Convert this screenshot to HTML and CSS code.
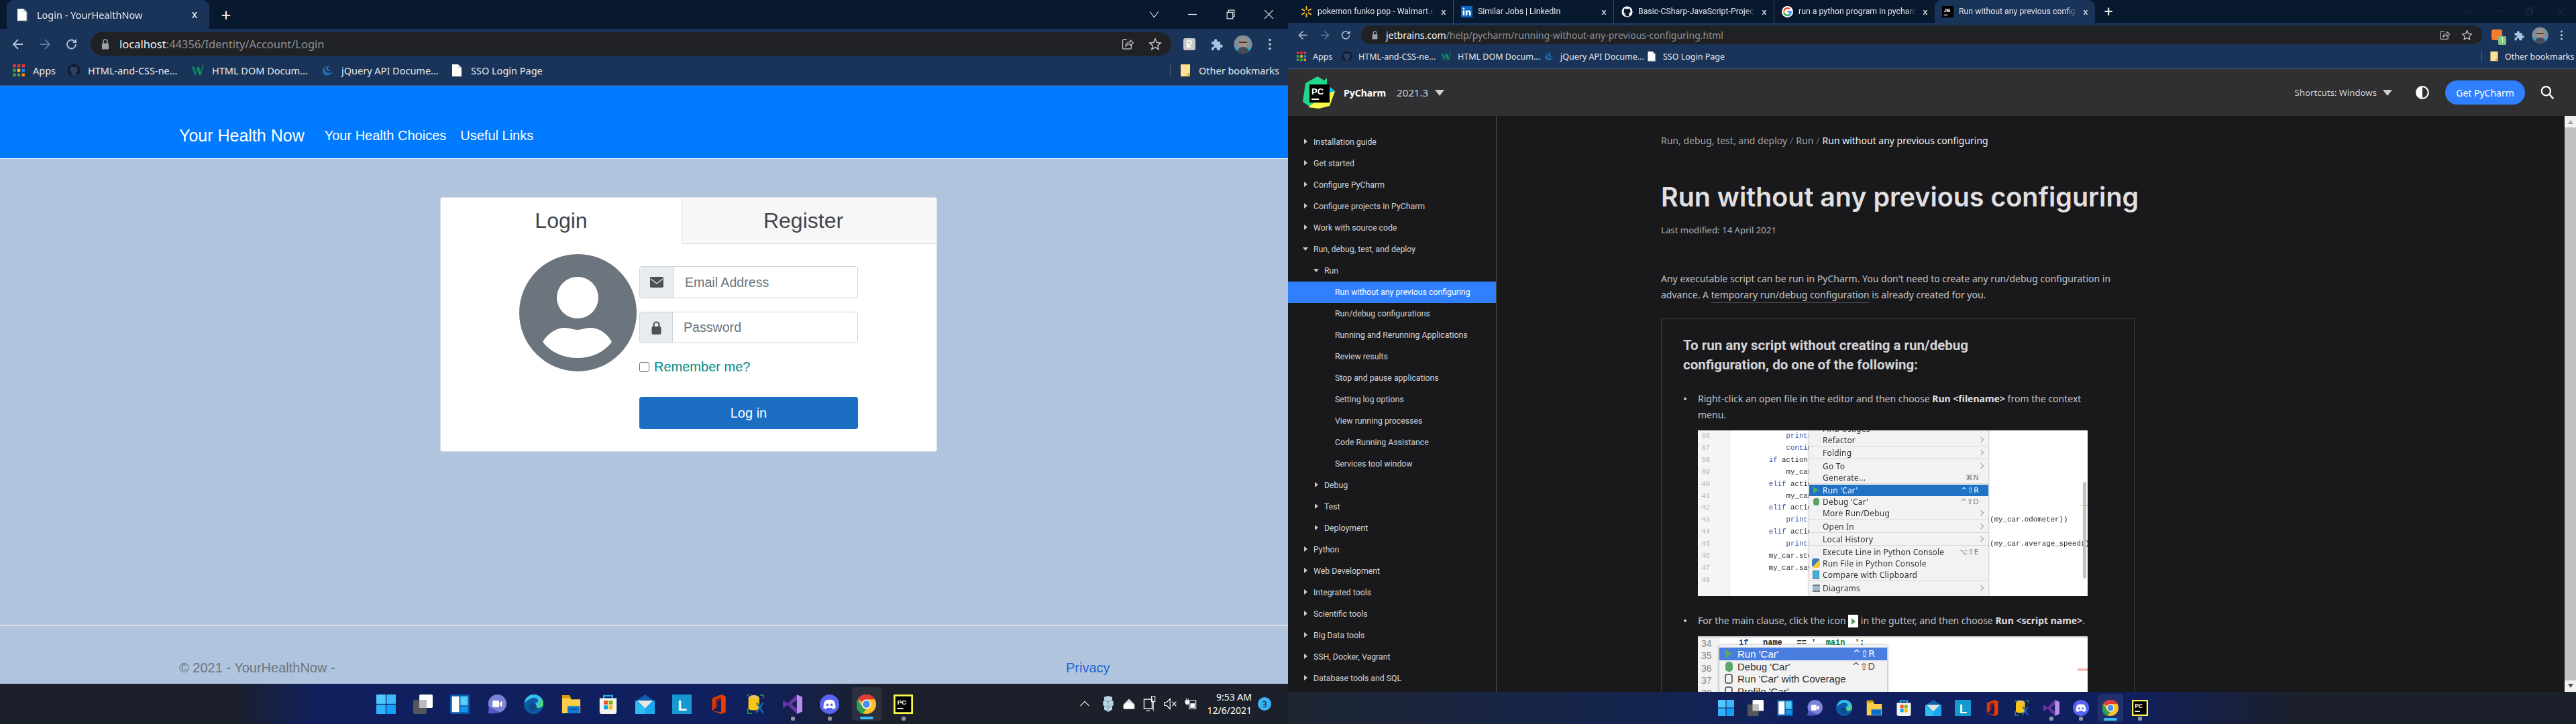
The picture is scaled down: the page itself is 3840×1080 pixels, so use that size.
FILE: index.html
```html
<!DOCTYPE html>
<html lang="en">
<head>
<meta charset="utf-8">
<title>Two Chrome windows</title>
<link rel="stylesheet" href="styles.css">
</head>
<body>
<svg class="sprite" aria-hidden="true">
  <symbol id="i-doc" viewBox="0 0 20 20"><path d="M3 1h9l5 5v13H3z" fill="#fff"/><path d="M12 1v5h5" fill="#c9d2dd"/><path d="M17 6v13H5" fill="none" stroke="#8b97a6" stroke-width="1.2"/></symbol>
  <symbol id="c-chev" viewBox="0 0 14 14"><path d="M1 3l6 8 6-8" fill="none" stroke="currentColor" stroke-width="1"/></symbol>
  <symbol id="c-min" viewBox="0 0 14 14"><path d="M1 7h12" stroke="currentColor" stroke-width="1.200"/></symbol>
  <symbol id="c-max" viewBox="0 0 14 14"><path d="M2 4h8v9H2zM4 4V1h8v9h-2" fill="none" stroke="currentColor" stroke-width="1.100"/></symbol>
  <symbol id="c-close" viewBox="0 0 14 14"><path d="M1 1l12 12M13 1L1 13" stroke="currentColor" stroke-width="1.100"/></symbol>
  <symbol id="i-back" viewBox="0 0 20 20"><path d="M17 10H4M10 3l-7 7 7 7" fill="none" stroke="currentColor" stroke-width="1.8"/></symbol>
  <symbol id="i-fwd" viewBox="0 0 20 20"><path d="M3 10h13M10 3l7 7-7 7" fill="none" stroke="currentColor" stroke-width="1.8"/></symbol>
  <symbol id="i-reload" viewBox="0 0 20 20"><path d="M16 10a6.500 6.500 0 1 1-2-4.700" fill="none" stroke="currentColor" stroke-width="1.8"/><path d="M17 2v6h-6z" fill="currentColor"/></symbol>
  <symbol id="i-lock" viewBox="0 0 14 18"><path d="M4 8V5a3 3 0 0 1 6 0v3" fill="none" stroke="#9aa0a6" stroke-width="1.6"/><rect x="2" y="7.500" width="10" height="9" rx="1" fill="#9aa0a6"/></symbol>
  <symbol id="i-share" viewBox="0 0 20 20"><path d="M9 3H4a1.500 1.500 0 0 0-1.500 1.500v11A1.500 1.500 0 0 0 4 17h10a1.500 1.500 0 0 0 1.500-1.500V11" fill="none" stroke="#b7babe" stroke-width="1.4"/><path d="M7 13c0-4 3-6.500 7-6.500V4l4.500 4-4.500 4V9.500c-3 0-5 1-7 3.500z" fill="none" stroke="#b7babe" stroke-width="1.3"/></symbol>
  <symbol id="i-star" viewBox="0 0 20 20"><path d="M10 2l2.400 5.400 5.800.6-4.400 3.900 1.300 5.700L10 14.700l-5.100 2.900 1.300-5.700L1.800 8l5.800-.6z" fill="none" stroke="#c8cbcf" stroke-width="1.5"/></symbol>
  <symbol id="i-puzzle" viewBox="0 0 20 20"><path d="M3 6h4V4.500a2.200 2.200 0 0 1 4.400 0V6H16v4.500h1.500a2.200 2.200 0 0 1 0 4.400H16V19H11v-1.500a2.200 2.200 0 0 0-4.400 0V19H3v-4.500h1.500a2.200 2.200 0 0 0 0-4.400H3z" fill="#a8c0e2"/></symbol>
  <symbol id="i-avatar" viewBox="0 0 28 28"><defs><clipPath id="av"><circle cx="14" cy="14" r="13.500"/></clipPath></defs><g clip-path="url(#av)"><rect width="28" height="28" fill="#7f8f99"/><rect y="19" width="28" height="9" fill="#2fa9c6"/><ellipse cx="14" cy="12" rx="6" ry="7.500" fill="#a99083"/><path d="M5 28c0-7 4-10 9-10s9 3 9 10z" fill="#454c55"/><rect x="8" y="10" width="12" height="2" fill="#3c3c3c"/></g></symbol>
  <symbol id="i-menu" viewBox="0 0 6 20"><circle cx="3" cy="3.500" r="1.800" fill="#c3cfe0"/><circle cx="3" cy="10" r="1.800" fill="#c3cfe0"/><circle cx="3" cy="16.500" r="1.800" fill="#c3cfe0"/></symbol>
  <symbol id="i-ext" viewBox="0 0 20 20"><rect x="1" y="1" width="18" height="18" rx="3" fill="#c9c9c9"/><path d="M7 15V5h4a2.500 2.500 0 0 1 0 5H8l4 5M9 10v5" fill="none" stroke="#fff" stroke-width="1.500"/></symbol>
  <symbol id="i-apps" viewBox="0 0 18 18"><path d="M1 1h4v4H1zM7 1h4v4H7zM13 1h4v4h-4z" fill="#e53935"/><path d="M1 7h4v4H1z" fill="#43a047"/><path d="M7 7h4v4H7z" fill="#fbc02d"/><path d="M13 7h4v4h-4z" fill="#1e88e5"/><path d="M1 13h4v4H1zM7 13h4v4H7z" fill="#43a047"/><path d="M13 13h4v4h-4z" fill="#fb8c00"/></symbol>
  <symbol id="i-gh" viewBox="0 0 20 20"><circle cx="10" cy="10" r="9.500" fill="currentColor"/><path d="M7.500 18v-3c-2.500.5-3-1-3.500-2 1 .3 1.500 1 2.500 1.300.3-.7.6-1 1-1.300-2.500-.4-3.500-1.700-3.500-4 0-1 .3-1.800 1-2.500-.2-.8-.1-1.600.2-2.300.9 0 1.700.4 2.300 1a8 8 0 0 1 5 0c.6-.6 1.400-1 2.300-1 .3.700.4 1.500.2 2.300.7.700 1 1.500 1 2.500 0 2.300-1 3.600-3.500 4 .5.400 1 1 1 1.800V18z" fill="var(--gh-in,#1a3358)"/></symbol>
  <symbol id="i-w3" viewBox="0 0 22 20"><path d="M1 4h4l2 9 3-9h3l3 9 2-9h2l-4 14h-3l-3-9-3 9H6z" fill="#0f8a5f"/><path d="M17 1h3v1l-1 1 1 1-1 1h-2" fill="none" stroke="#0f8a5f" stroke-width=".8"/></symbol>
  <symbol id="i-jq" viewBox="0 0 20 22"><path d="M12 1C6 4 4 9 7 13c3 3 8 3 12-1-3 7-10 9-14 6C0 14 2 5 12 1z" fill="#1f6fb5"/><path d="M14 3c-3 2-4 5-2 7 2 1 4 1 6-1-2 3-6 4-8 2-3-3-1-7 4-8z" fill="#2f86cf"/></symbol>
  <symbol id="i-folder" viewBox="0 0 20 20"><path d="M3 1h14v18H3z" fill="#fde293"/><path d="M13 19v-5h4v5z" fill="#e3b341"/></symbol>
  <symbol id="i-walmart" viewBox="0 0 20 20"><g stroke="#fdbb30" stroke-width="2.200" stroke-linecap="round"><path d="M10 1v5M10 14v5M2.200 5.500l4.300 2.500M13.500 12l4.300 2.500M2.200 14.500l4.300-2.500M13.500 8l4.300-2.500"/></g></symbol>
  <symbol id="i-li" viewBox="0 0 20 20"><rect width="20" height="20" fill="#0a66c2"/><rect x="3" y="7.500" width="3" height="9" fill="#fff"/><circle cx="4.500" cy="4.500" r="1.700" fill="#fff"/><path d="M8 7.500h3V9c1-2 6-2.500 6 2v5.500h-3V12c0-2.500-3-2.500-3 0v4.500H8z" fill="#fff"/></symbol>
  <symbol id="i-g" viewBox="0 0 20 20"><circle cx="10" cy="10" r="10" fill="#fff"/><path d="M17.500 10.200c0-.6 0-1.100-.2-1.600H10v3h4.200a3.600 3.600 0 0 1-1.500 2.400v2h2.500c1.500-1.400 2.300-3.400 2.300-5.800z" fill="#4285f4"/><path d="M10 18c2.100 0 3.900-.7 5.200-1.900l-2.500-2c-.7.500-1.600.8-2.700.8-2 0-3.800-1.400-4.400-3.300H3v2C4.300 16.300 7 18 10 18z" fill="#34a853"/><path d="M5.600 11.600a4.800 4.800 0 0 1 0-3.100v-2H3a8 8 0 0 0 0 7.100z" fill="#fbbc05"/><path d="M10 5.100c1.200 0 2.200.4 3 1.200l2.200-2.200A8 8 0 0 0 3 6.500l2.600 2c.6-1.900 2.400-3.400 4.400-3.400z" fill="#ea4335"/></symbol>
  <symbol id="i-jb" viewBox="0 0 20 20"><rect width="20" height="20"/><text x="3" y="11" font-family="Liberation Sans" font-weight="700" font-size="9" fill="#fff">JB</text><rect x="3" y="15" width="7" height="1.500" fill="#fff"/></symbol>
  <symbol id="i-pc" viewBox="0 0 48 48"><path d="M4 10L22 0l10 6 4-4v18L12 46 0 38z" fill="#21d789"/><path d="M36 12l12 10-8 12z" fill="#07c3f2"/><path d="M8 46l16 2 16-4 8-22-14 4z" fill="#fcf84a"/><rect x="10" y="12" width="30" height="27" fill="#000"/><text x="13" y="27" font-family="Liberation Sans" font-weight="700" font-size="13" fill="#fff">PC</text><rect x="13" y="33" width="11" height="2" fill="#fff"/></symbol>
  <symbol id="i-contrast" viewBox="0 0 20 20"><circle cx="10" cy="10" r="8" fill="none" stroke="#fff" stroke-width="2"/><path d="M10 2a8 8 0 0 0 0 16z" fill="#fff"/></symbol>
  <symbol id="i-search" viewBox="0 0 20 20"><circle cx="8.500" cy="8" r="6" fill="none" stroke="#fff" stroke-width="2"/><path d="M13 12.500l5.500 6" stroke="#fff" stroke-width="2.200"/></symbol>
  <symbol id="i-env" viewBox="0 0 20 16"><rect width="20" height="16" rx="2" fill="#495057"/><path d="M1 3l9 7 9-7" fill="none" stroke="#e9ecef" stroke-width="1.200"/></symbol>
  <symbol id="i-padlock" viewBox="0 0 16 20"><path d="M4 9V5.500a4 4 0 0 1 8 0V9" fill="none" stroke="#495057" stroke-width="2.200"/><rect x="1" y="8" width="14" height="12" rx="2" fill="#495057"/></symbol>
  <symbol id="i-user" viewBox="0 0 175 175"><circle cx="87.500" cy="87.500" r="87.500" fill="#6c757d"/><circle cx="87" cy="65" r="31" fill="#fff"/><path d="M35 131C43 118 55 110 68 110c8 0 12 3 19 3s11-3 19-3c13 0 25 8 32 21-12 16-31 24-51 24s-40-8-52-24z" fill="#fff"/></symbol>
  <symbol id="t-win" viewBox="0 0 32 32"><path d="M0 0h15.300v15.300H0z" fill="#4fc8ff"/><path d="M16.700 0H32v15.300H16.700z" fill="#3cb8fb"/><path d="M0 16.700h15.300V32H0z" fill="#2db2fb"/><path d="M16.700 16.700H32V32H16.700z" fill="#15a0f5"/></symbol>
  <symbol id="t-task" viewBox="0 0 32 32"><rect x="10" y="0" width="22" height="22" rx="2" fill="#fff"/><rect x="0" y="9" width="22" height="23" rx="2" fill="#5b5b5b" opacity=".92"/><rect x="10" y="9" width="12" height="13" fill="#bdbdbd"/></symbol>
  <symbol id="t-widget" viewBox="0 0 32 32"><rect width="32" height="32" rx="2" fill="#0b5cad"/><rect x="3" y="3" width="12" height="26" rx="1" fill="#fff"/><rect x="17" y="3" width="12" height="15" fill="#58cdfc"/><rect x="17" y="20" width="12" height="9" fill="#1397ea"/></symbol>
  <symbol id="t-chat" viewBox="0 0 32 32"><ellipse cx="17" cy="15" rx="15" ry="15" fill="#7b83d8"/><path d="M3 20c0 5-1 9-2 11 8 1 14 0 20-2z" fill="#5558c4"/><rect x="9" y="10" width="11" height="11" rx="2" fill="#fff"/><path d="M21 13l4-2v9l-4-2z" fill="#fff"/></symbol>
  <symbol id="t-edge" viewBox="0 0 32 32"><circle cx="16" cy="16" r="16" fill="#0c59a4"/><path d="M1 13C3 4 10 0 16 0c9 0 16 6 16 15 0 4-3 7-8 7-4 0-6-2-6-4 0-6 5-3 5-8 0-4-6-6-10-4-6 2-9 6-12 7z" fill="#35c1f1"/><path d="M26 6c4 3 6 6 6 9 0 4-3 7-8 7-3 0-5-1-6-3 5 1 8-2 8-13z" fill="#52d17c"/><ellipse cx="15" cy="21" rx="6" ry="7" fill="#114a8b"/></symbol>
  <symbol id="t-folder" viewBox="0 0 32 32"><path d="M1 4h12l3 4h15v23H1z" fill="#fccd48"/><path d="M1 1h12l3 5H1z" fill="#d8a00f"/><rect x="10" y="19" width="20" height="12" fill="#0f78d4"/><rect x="13" y="23" width="14" height="2" fill="#0b4f91"/></symbol>
  <symbol id="t-store" viewBox="0 0 32 32"><path d="M9 7V2h14v5" fill="none" stroke="#27b0ee" stroke-width="2.500"/><path d="M2 6h28v22a4 4 0 0 1-4 4H6a4 4 0 0 1-4-4z" fill="#f3f3f3"/><rect x="9" y="10" width="6.500" height="6.500" fill="#f25022"/><rect x="17" y="10" width="6.500" height="6.500" fill="#7fba00"/><rect x="9" y="18" width="6.500" height="6.500" fill="#00a4ef"/><rect x="17" y="18" width="6.500" height="6.500" fill="#ffb900"/></symbol>
  <symbol id="t-mail" viewBox="0 0 32 32"><path d="M16 0l16 11H0z" fill="#0f5fb4"/><rect y="10" width="32" height="22" fill="#1aa7ec"/><path d="M3 10h26L16 23z" fill="#e6e6e6"/><path d="M0 11l16 13v8H0z" fill="#32bdf2"/></symbol>
  <symbol id="t-l" viewBox="0 0 32 32"><rect width="32" height="32" fill="#1699d1"/><text x="9" y="26" font-family="Liberation Sans" font-weight="700" font-size="25" fill="#fff">L</text></symbol>
  <symbol id="t-office" viewBox="0 0 32 32"><path d="M5 6L20 0l7 3v26l-7 3-15-5 15 2V5L11 8v14l-6 5z" fill="#d83b01"/><path d="M20 0l7 3v26l-7 3z" fill="#eb3c00"/><path d="M11 8l9-3v4l-6 2v10l-3 1z" fill="#8c1a2b"/></symbol>
  <symbol id="t-ssms" viewBox="0 0 32 32"><ellipse cx="13" cy="6" rx="9" ry="5" fill="#e8c36a"/><path d="M4 6v16c0 3 4 4 9 4s9-1 9-4V6z" fill="#f5c518"/><path d="M3 3V0h6M29 6V1h-6M3 22v9h7" fill="none" stroke="#2e8b3c" stroke-width="2"/><path d="M18 14l10 16M28 14L17 30" stroke="#1b6fc2" stroke-width="2.500"/></symbol>
  <symbol id="t-vs" viewBox="0 0 32 32"><path d="M23 0l9 4v24l-9 4z" fill="#b58ee6"/><path d="M23 0L8 15 2 10 0 11v10l2 1 6-5 15 15v-9L14 16l9-7z" fill="#6a33a8"/></symbol>
  <symbol id="t-discord" viewBox="0 0 32 32"><circle cx="16" cy="16" r="16" fill="#5865f2"/><path d="M9 10c4-2 10-2 14 0 2 3 3 7 3 12-2 1-3 2-5 2l-1-2h-8l-1 2c-2 0-3-1-5-2 0-5 1-9 3-12z" fill="#fff"/><circle cx="12.500" cy="17" r="2" fill="#5865f2"/><circle cx="19.500" cy="17" r="2" fill="#5865f2"/></symbol>
  <symbol id="t-chrome" viewBox="0 0 32 32"><circle cx="16" cy="16" r="16" fill="#fbc02d"/><path d="M2.100 8A16 16 0 0 1 29.900 8H16a8 8 0 0 0-7 4z" fill="#e53935"/><path d="M2.100 8l7 12A8 8 0 0 0 16 24l-7 8A16 16 0 0 1 2.100 8z" fill="#2e9e4f"/><circle cx="16" cy="16" r="7.500" fill="#fff"/><circle cx="16" cy="16" r="6" fill="#4a8ef0"/></symbol>
  <symbol id="t-pycharm" viewBox="0 0 32 32"><rect width="32" height="32" fill="#fcf84a"/><rect x="3" y="3" width="26" height="26" fill="#000"/><text x="6" y="16" font-family="Liberation Sans" font-weight="700" font-size="11" fill="#fff">PC</text><rect x="6" y="22" width="10" height="2" fill="#fff"/></symbol>
  <symbol id="t-cube" viewBox="0 0 20 28"><path d="M3 2l7-2 7 2v6l2 2v6l-2 2v6l-7 4-7-4v-6l-2-2v-6l2-2z" fill="#b9d4e4"/><path d="M10 8v20M3 8l7 2 7-2M3 18l7 2 7-2" stroke="#6f97ad" fill="none"/></symbol>
  <symbol id="t-cloud" viewBox="0 0 24 20"><path d="M2 11L12 1l10 10v8H2z" fill="#d9d9d9"/><path d="M6 19a4 4 0 0 1 0-8 6 6 0 0 1 11 0 4 4 0 0 1 1 8z" fill="#fff"/></symbol>
  <symbol id="t-net" viewBox="0 0 22 28"><path d="M1 6h14v16H1zM5 26h6" fill="none" stroke="#fff" stroke-width="1.500"/><rect x="14" y="1" width="6" height="9" fill="none" stroke="#fff" stroke-width="1.300"/><path d="M17 10v16" stroke="#fff" stroke-width="1.300"/></symbol>
  <symbol id="t-mute" viewBox="0 0 24 22"><path d="M1 8h4l6-6v18l-6-6H1z" fill="none" stroke="#fff" stroke-width="1.400"/><path d="M15 7l7 8M22 7l-7 8" stroke="#fff" stroke-width="1.400"/></symbol>
  <symbol id="t-batt" viewBox="0 0 24 24"><path d="M8 6h12v15H8z" fill="none" stroke="#fff" stroke-width="1.400"/><rect x="10" y="11" width="8" height="8" fill="#fff"/><path d="M3 2v4M6 2v4M1 6h7v4l-2 3H3L1 10z" fill="#fff" stroke="#fff"/></symbol>
</svg>

<div class="desktop">
  <section class="screen screen-l">
    <div class="window win-l">
      <header class="chrome">
        <div class="tabstrip">
          <div class="tab tab-active tab-single"><svg class="fav"><use href="#i-doc"/></svg><span class="tab-title">Login - YourHealthNow</span><span class="tab-x">x</span></div>
          <span class="tab-new">+</span>
          <div class="winctl"><span class="ctl"><svg class="ctl-ico"><use href="#c-chev"/></svg></span><span class="ctl"><svg class="ctl-ico"><use href="#c-min"/></svg></span><span class="ctl"><svg class="ctl-ico"><use href="#c-max"/></svg></span><span class="ctl"><svg class="ctl-ico"><use href="#c-close"/></svg></span></div>
        </div>
        <div class="toolbar">
          <svg class="nav-ico"><use href="#i-back"/></svg>
          <svg class="nav-ico nav-dim"><use href="#i-fwd"/></svg>
          <svg class="nav-ico"><use href="#i-reload"/></svg>
          <div class="omnibox"><svg class="lock"><use href="#i-lock"/></svg><span class="url"><b>localhost</b>:44356/Identity/Account/Login</span><svg class="omni-ico"><use href="#i-share"/></svg><svg class="omni-ico"><use href="#i-star"/></svg></div>
          <svg class="tool-ico"><use href="#i-ext"/></svg>
          <svg class="tool-ico"><use href="#i-puzzle"/></svg>
          <svg class="tool-ico tool-av"><use href="#i-avatar"/></svg>
          <svg class="tool-ico tool-menu"><use href="#i-menu"/></svg>
        </div>
        <nav class="bookmarks">
          <a class="bm bm-a"><svg class="bm-ico"><use href="#i-apps"/></svg>Apps</a>
          <a class="bm bm-g"><svg class="bm-ico"><use href="#i-gh"/></svg>HTML-and-CSS-ne...</a>
          <a class="bm bm-n"><svg class="bm-ico"><use href="#i-w3"/></svg>HTML DOM Docum...</a>
          <a class="bm bm-n"><svg class="bm-ico"><use href="#i-jq"/></svg>jQuery API Docume...</a>
          <a class="bm"><svg class="bm-ico"><use href="#i-doc"/></svg>SSO Login Page</a>
          <a class="bm bm-other"><svg class="bm-ico"><use href="#i-folder"/></svg>Other bookmarks</a>
        </nav>
      </header>
      <div class="site">
        <nav class="site-nav"><a class="brand">Your Health Now</a><a class="site-link">Your Health Choices</a><a class="site-link">Useful Links</a></nav>
        <main class="site-main">
          <div class="card">
            <div class="card-tabs"><div class="ctab ctab-on">Login</div><div class="ctab ctab-off">Register</div></div>
            <div class="card-body">
              <svg class="big-user"><use href="#i-user"/></svg>
              <form class="login-form">
                <div class="igroup"><span class="iprefix"><svg class="i-env"><use href="#i-env"/></svg></span><span class="ifield">Email Address</span></div>
                <div class="igroup igroup-pw"><span class="iprefix"><svg class="i-pad"><use href="#i-padlock"/></svg></span><span class="ifield">Password</span></div>
                <label class="remember"><span class="check"></span>Remember me?</label>
                <div class="login-btn">Log in</div>
              </form>
            </div>
          </div>
        </main>
        <footer class="site-foot"><span class="foot-copy">&copy; 2021 - YourHealthNow -</span><a class="foot-link">Privacy</a></footer>
      </div>
    </div>
    <div class="taskbar tb-l">
      <div class="tb-item"><svg class="tb-ico"><use href="#t-win"/></svg></div>
      <div class="tb-item"><svg class="tb-ico"><use href="#t-task"/></svg></div>
      <div class="tb-item"><svg class="tb-ico"><use href="#t-widget"/></svg></div>
      <div class="tb-item"><svg class="tb-ico"><use href="#t-chat"/></svg></div>
      <div class="tb-item"><svg class="tb-ico"><use href="#t-edge"/></svg></div>
      <div class="tb-item"><svg class="tb-ico"><use href="#t-folder"/></svg></div>
      <div class="tb-item"><svg class="tb-ico"><use href="#t-store"/></svg></div>
      <div class="tb-item"><svg class="tb-ico"><use href="#t-mail"/></svg></div>
      <div class="tb-item"><svg class="tb-ico"><use href="#t-l"/></svg></div>
      <div class="tb-item"><svg class="tb-ico"><use href="#t-office"/></svg></div>
      <div class="tb-item"><svg class="tb-ico"><use href="#t-ssms"/></svg></div>
      <div class="tb-item run"><svg class="tb-ico"><use href="#t-vs"/></svg></div>
      <div class="tb-item run"><svg class="tb-ico"><use href="#t-discord"/></svg></div>
      <div class="tb-item active"><svg class="tb-ico"><use href="#t-chrome"/></svg></div>
      <div class="tb-item run"><svg class="tb-ico"><use href="#t-pycharm"/></svg></div>
      <div class="tray">
        <span class="tray-caret"></span>
        <svg class="tray-ico"><use href="#t-cube"/></svg>
        <svg class="tray-ico"><use href="#t-cloud"/></svg>
        <svg class="tray-ico"><use href="#t-net"/></svg>
        <svg class="tray-ico"><use href="#t-mute"/></svg>
        <svg class="tray-ico"><use href="#t-batt"/></svg>
        <div class="clock"><span>9:53 AM</span><span>12/6/2021</span></div>
        <span class="notif">3</span>
      </div>
    </div>
  </section>

  <section class="screen screen-r">
    <div class="window win-r">
      <header class="chrome">
        <div class="tabstrip">
          <div class="tab"><svg class="fav"><use href="#i-walmart"/></svg><span class="tab-title">pokemon funko pop - Walmart.com</span><span class="tab-x">x</span></div>
          <div class="tab"><svg class="fav"><use href="#i-li"/></svg><span class="tab-title">Similar Jobs | LinkedIn</span><span class="tab-x">x</span></div>
          <div class="tab tab-gh"><svg class="fav"><use href="#i-gh"/></svg><span class="tab-title">Basic-CSharp-JavaScript-Projects/</span><span class="tab-x">x</span></div>
          <div class="tab tab-last"><svg class="fav"><use href="#i-g"/></svg><span class="tab-title">run a python program in pycharm</span><span class="tab-x">x</span></div>
          <div class="tab tab-active"><svg class="fav"><use href="#i-jb"/></svg><span class="tab-title">Run without any previous configuring</span><span class="tab-x">x</span></div>
          <span class="tab-new">+</span>
          <div class="winctl winctl-dim"><span class="ctl"><svg class="ctl-ico"><use href="#c-chev"/></svg></span><span class="ctl"><svg class="ctl-ico"><use href="#c-min"/></svg></span><span class="ctl"><svg class="ctl-ico"><use href="#c-max"/></svg></span><span class="ctl"><svg class="ctl-ico"><use href="#c-close"/></svg></span></div>
        </div>
        <div class="toolbar">
          <svg class="nav-ico"><use href="#i-back"/></svg>
          <svg class="nav-ico nav-dim"><use href="#i-fwd"/></svg>
          <svg class="nav-ico"><use href="#i-reload"/></svg>
          <div class="omnibox"><svg class="lock"><use href="#i-lock"/></svg><span class="url"><b>jetbrains.com</b>/help/pycharm/running-without-any-previous-configuring.html</span><svg class="omni-ico"><use href="#i-share"/></svg><svg class="omni-ico"><use href="#i-star"/></svg></div>
          <div class="ext-wrap"><span class="ext-orange"></span><span class="ext-badge">1</span></div>
          <svg class="tool-ico"><use href="#i-puzzle"/></svg>
          <svg class="tool-ico tool-av"><use href="#i-avatar"/></svg>
          <svg class="tool-ico tool-menu"><use href="#i-menu"/></svg>
        </div>
        <nav class="bookmarks">
          <a class="bm bm-a"><svg class="bm-ico"><use href="#i-apps"/></svg>Apps</a>
          <a class="bm bm-g"><svg class="bm-ico"><use href="#i-gh"/></svg>HTML-and-CSS-ne...</a>
          <a class="bm bm-n"><svg class="bm-ico"><use href="#i-w3"/></svg>HTML DOM Docum...</a>
          <a class="bm bm-n"><svg class="bm-ico"><use href="#i-jq"/></svg>jQuery API Docume...</a>
          <a class="bm"><svg class="bm-ico"><use href="#i-doc"/></svg>SSO Login Page</a>
          <a class="bm bm-other"><svg class="bm-ico"><use href="#i-folder"/></svg>Other bookmarks</a>
        </nav>
      </header>
      <div class="docs">
        <div class="docs-head">
          <svg class="pc-logo"><use href="#i-pc"/></svg>
          <span class="pc-name">PyCharm</span>
          <span class="pc-ver">2021.3</span><span class="tri"></span>
          <span class="pc-short">Shortcuts: Windows</span><span class="tri tri-s"></span>
          <svg class="pc-contrast"><use href="#i-contrast"/></svg>
          <span class="pc-get">Get PyCharm</span>
          <svg class="pc-search"><use href="#i-search"/></svg>
        </div>
        <div class="docs-body">
          <aside class="toc">
            <a class="ti l1">Installation guide</a>
            <a class="ti l1">Get started</a>
            <a class="ti l1">Configure PyCharm</a>
            <a class="ti l1">Configure projects in PyCharm</a>
            <a class="ti l1">Work with source code</a>
            <a class="ti l1 open">Run, debug, test, and deploy</a>
            <a class="ti l2 open">Run</a>
            <a class="ti l3 sel">Run without any previous configuring</a>
            <a class="ti l3">Run/debug configurations</a>
            <a class="ti l3">Running and Rerunning Applications</a>
            <a class="ti l3">Review results</a>
            <a class="ti l3">Stop and pause applications</a>
            <a class="ti l3">Setting log options</a>
            <a class="ti l3">View running processes</a>
            <a class="ti l3">Code Running Assistance</a>
            <a class="ti l3">Services tool window</a>
            <a class="ti l2">Debug</a>
            <a class="ti l2">Test</a>
            <a class="ti l2">Deployment</a>
            <a class="ti l1">Python</a>
            <a class="ti l1">Web Development</a>
            <a class="ti l1">Integrated tools</a>
            <a class="ti l1">Scientific tools</a>
            <a class="ti l1">Big Data tools</a>
            <a class="ti l1">SSH, Docker, Vagrant</a>
            <a class="ti l1">Database tools and SQL</a>
          </aside>
          <article class="article">
            <div class="crumbs"><span>Run, debug, test, and deploy</span><i>/</i><span>Run</span><i>/</i><b>Run without any previous configuring</b></div>
            <h1 class="title">Run without any previous configuring</h1>
            <p class="modified">Last modified: 14 April 2021</p>
            <p class="intro">Any executable script can be run in PyCharm. You don't need to create any run/debug configuration in advance. A <span class="dashed">temporary run/debug configuration</span> is already created for you.</p>
            <div class="procedure">
              <h2 class="proc-title">To run any script without creating a run/debug configuration, do one of the following:</h2>
              <ul class="proc-list">
                <li class="proc-item">Right-click an open file in the editor and then choose <b>Run &lt;filename&gt;</b> from the context menu.
                  <div class="shot shot-a">
                    <div class="gutter"><span>36</span><span>37</span><span>38</span><span>39</span><span>40</span><span>41</span><span>42</span><span>43</span><span>44</span><span>45</span><span>46</span><span>47</span><span>48</span></div>
<pre class="code"><span class="kw">            print</span>("Invalid action")
<span class="kw">            continue</span>
        <span class="kw">if</span> action == 'A':
            my_car.accelerate()
        <span class="kw">elif</span> action == 'B':
            my_car.brake()
        <span class="kw">elif</span> action == 'O':
            <span class="kw">print</span>("The car has driven {} kilometers".format(my_car.odometer))
        <span class="kw">elif</span> action == 'S':
            <span class="kw">print</span>("The car's average speed: {} km/h".format(my_car.average_speed()))
        my_car.step()
        my_car.say_state()
</pre>
                    <span class="shot-scroll"></span><span class="shot-tick"></span>
                    <div class="ctx">
                      <div class="mi">Find Usages</div>
                      <div class="mi arrow">Refactor</div><div class="ms"></div>
                      <div class="mi arrow">Folding</div><div class="ms"></div>
                      <div class="mi arrow">Go To</div>
                      <div class="mi">Generate...<em>&#8984;N</em></div><div class="ms"></div>
                      <div class="mi hl"><span class="play"></span>Run 'Car'<em>^&#8679;R</em></div>
                      <div class="mi"><span class="bug"></span>Debug 'Car'<em>^&#8679;D</em></div>
                      <div class="mi arrow">More Run/Debug</div><div class="ms"></div>
                      <div class="mi arrow">Open In</div><div class="ms"></div>
                      <div class="mi arrow">Local History</div><div class="ms"></div>
                      <div class="mi">Execute Line in Python Console<em>&#8997;&#8679;E</em></div>
                      <div class="mi"><span class="py"></span>Run File in Python Console</div>
                      <div class="mi"><span class="cmp"></span>Compare with Clipboard</div><div class="ms"></div>
                      <div class="mi arrow"><span class="dia"></span>Diagrams</div>
                    </div>
                  </div>
                </li>
                <li class="proc-item proc-second">For the main clause, click the icon <span class="gutter-ico"></span> in the gutter, and then choose <b>Run &lt;script name&gt;</b>.
                  <div class="shot shot-b">
                    <div class="gutter2"><span>34</span><span>35</span><span>36</span><span>37</span><span>38</span></div>
                    <div class="code2"><span class="kw2">if</span> __name__ == '<span class="str2">__main__</span>':</div>
                    <span class="shot-tick2"></span>
                    <div class="ctx2">
                      <div class="mi2 hl2"><span class="play2"></span>Run 'Car'<em>^&#8679;R</em></div>
                      <div class="mi2"><span class="bug2"></span>Debug 'Car'<em>^&#8679;D</em></div>
                      <div class="mi2"><span class="cov2"></span>Run 'Car' with Coverage</div>
                      <div class="mi2"><span class="cov2"></span>Profile 'Car'</div>
                    </div>
                  </div>
                </li>
              </ul>
            </div>
          </article>
          <div class="scrollbar"><span class="sb-up"></span><span class="sb-thumb"></span><span class="sb-down"></span></div>
        </div>
      </div>
    </div>
    <div class="taskbar tb-r">
      <div class="tb-item"><svg class="tb-ico"><use href="#t-win"/></svg></div>
      <div class="tb-item"><svg class="tb-ico"><use href="#t-task"/></svg></div>
      <div class="tb-item"><svg class="tb-ico"><use href="#t-widget"/></svg></div>
      <div class="tb-item"><svg class="tb-ico"><use href="#t-chat"/></svg></div>
      <div class="tb-item"><svg class="tb-ico"><use href="#t-edge"/></svg></div>
      <div class="tb-item"><svg class="tb-ico"><use href="#t-folder"/></svg></div>
      <div class="tb-item"><svg class="tb-ico"><use href="#t-store"/></svg></div>
      <div class="tb-item"><svg class="tb-ico"><use href="#t-mail"/></svg></div>
      <div class="tb-item"><svg class="tb-ico"><use href="#t-l"/></svg></div>
      <div class="tb-item"><svg class="tb-ico"><use href="#t-office"/></svg></div>
      <div class="tb-item"><svg class="tb-ico"><use href="#t-ssms"/></svg></div>
      <div class="tb-item run"><svg class="tb-ico"><use href="#t-vs"/></svg></div>
      <div class="tb-item run"><svg class="tb-ico"><use href="#t-discord"/></svg></div>
      <div class="tb-item active"><svg class="tb-ico"><use href="#t-chrome"/></svg></div>
      <div class="tb-item run"><svg class="tb-ico"><use href="#t-pycharm"/></svg></div>
    </div>
  </section>
</div>
</body>
</html>
```
FILE: styles.css
```css
* { box-sizing: border-box; }
html, body { margin: 0; padding: 0; }
body { width: 3840px; height: 1080px; overflow: hidden; font-family: "Noto Sans", sans-serif; background: #000; }
.sprite { position: absolute; width: 0; height: 0; }
svg { display: block; flex: none; }

.desktop { display: flex; width: 3840px; height: 1080px; }
.screen { width: 1920px; height: 1080px; display: flex; flex-direction: column; }
.window { flex: 1; min-height: 0; display: flex; flex-direction: column; overflow: hidden; }

/* browser chrome: the left screen is at 125% of the right one */
.win-l { --tabs: 43px; --tabw: 302px; --fav: 20px; --side: 10px; --tbar: 40px; --omni: 35px; --bmh: 45px; --bmfs: 14.5px; --icon: 20px; --step: 40px; --pad: 7px; --ctl: 57px; --ctlsz: 15px; --urlfs: 16.500px; }
.win-r { --tabs: 34px; --tabw: 239px; --fav: 17px; --side: 8px; --tbar: 32px; --omni: 28px; --bmh: 37px; --bmfs: 12.5px; --icon: 17px; --step: 32px; --pad: 6px; --ctl: 46px; --ctlsz: 12px; --urlfs: 14px; }
.chrome { flex: none; background: #1a3358; color: #e8eaed; }
.tabstrip { height: var(--tabs); background: #07182f; display: flex; align-items: stretch; padding-left: var(--side); }
.tab { width: var(--tabw); flex: none; display: flex; align-items: center; padding: 0 8px 0 11px; gap: 8px; font-size: 12.300px; font-family: "Roboto", sans-serif; position: relative; border-right: 1px solid #3d4c63; }
.tab-title { flex: 1; min-width: 0; white-space: nowrap; overflow: hidden; -webkit-mask-image: linear-gradient(90deg, #000 92%, transparent); mask-image: linear-gradient(90deg, #000 92%, transparent); }
.tab-x { flex: none; width: 12px; text-align: center; font-size: 1.100em; color: #fff; font-family: "Liberation Sans", sans-serif; }
.tab-active { background: #1a3358; border-radius: 10px 10px 0 0; border-right: 0; }
.tab-last { border-right: 0; }
.tab-single { padding: 0 16px 0 13px; gap: 12px; font-size: 14.500px; font-family: "Noto Sans", sans-serif; }
.fav { width: var(--fav); height: var(--fav); color: #fff; --gh-in: #07182f; }
.tab-new { width: 50px; flex: none; display: flex; align-items: center; justify-content: center; font-size: 26px; color: #fff; line-height: 1; }
.win-r .tab-new { width: 40px; font-size: 24px; }
.winctl { margin-left: auto; display: flex; align-items: center; }
.ctl { width: var(--ctl); display: flex; justify-content: center; color: #e8eaed; }
.ctl-ico { width: var(--ctlsz); height: var(--ctlsz); }
.winctl-dim .ctl { color: #1f3556; }

.toolbar { height: var(--tbar); display: flex; align-items: flex-end; padding: 0 var(--pad); color: #b3c5dd; }
.toolbar > svg, .ext-wrap { margin-bottom: calc((var(--omni) - var(--icon)) / 2); }
.nav-ico { width: var(--icon); height: var(--icon); margin-left: calc((var(--step) - var(--icon)) / 2); margin-right: calc((var(--step) - var(--icon)) / 2); }
.nav-dim { color: #5e7697; }
.omnibox { flex: 1; height: var(--omni); margin: 0 var(--pad) 0 calc(var(--pad) + 1px); background: #202124; border-radius: 18px; display: flex; align-items: center; padding: 0 14px 0 15px; min-width: 0; }
.lock { width: 14px; height: 18px; margin-right: 14px; }
.win-r .lock { width: 11px; height: 15px; margin-right: 11px; }
.url { flex: 1; font-size: var(--urlfs); color: #8e9296; white-space: nowrap; }
.url b { font-weight: 400; color: #f1f3f4; }
.omni-ico { width: var(--icon); height: var(--icon); margin-left: 21px; }
.win-r .omni-ico { margin-left: 16px; }
.tool-ico { width: var(--icon); height: var(--icon); margin-left: calc((var(--step) - var(--icon)) / 2); margin-right: calc((var(--step) - var(--icon)) / 2); }
.toolbar > .tool-av { width: calc(var(--icon) + 8px); height: calc(var(--icon) + 8px); margin-left: calc((var(--step) - var(--icon) - 8px) / 2); margin-right: calc((var(--step) - var(--icon) - 8px) / 2); margin-bottom: calc((var(--omni) - var(--icon) - 8px) / 2); }
.ext-wrap { width: var(--step); height: var(--icon); display: flex; justify-content: center; position: relative; }
.ext-orange { width: 16px; height: 16px; background: #f57c2b; border-radius: 3px; }
.ext-badge { position: absolute; left: 18px; top: 10px; width: 12px; height: 13px; background: #7cc47f; border-radius: 2px; font-size: 10px; line-height: 13px; text-align: center; color: #fff; }

.bookmarks { height: var(--bmh); display: flex; align-items: center; font-size: var(--bmfs); border-bottom: 1px solid #3a5b86; padding-left: 18px; color: #e8eaed; white-space: nowrap; }
.win-r .bookmarks { padding-left: 12px; }
.bm { display: flex; align-items: center; gap: 11px; width: 193px; flex: none; --gh-in: #2b415f; color: #e8eaed; overflow: hidden; }
.win-r .bm { width: 153px; gap: 9px; }
.bm-a { width: 82px; }
.win-r .bm-a { width: 68px; }
.bm-g { width: 185px; }
.win-r .bm-g { width: 148px; }
.bm-other, .win-r .bm-other { margin-left: auto; border-left: 1px solid #46607f; width: 176px; padding-left: 12px; gap: 10px; }
.win-r .bm-other { width: 141px; padding-left: 10px; gap: 8px; }
.bm-ico { width: 20px; height: 20px; color: #0d1c33; }
.win-r .bm-ico { width: 16px; height: 16px; }

/* login site */
.site { flex: 1; min-height: 0; background: #b0c4de; display: flex; flex-direction: column; font-family: "Liberation Sans", sans-serif; }
.site-nav { height: 109px; flex: none; background: #007bff; border-bottom: 1px solid #e8eef6; display: flex; align-items: center; padding-left: 267px; padding-top: 41px; color: #fff; }
.brand { font-size: 25px; margin-right: 30px; }
.site-link { font-size: 20px; margin-right: 21px; }
.site-main { flex: 1; padding: 57px 0 0 656px; }
.card { width: 741px; height: 380px; background: #fff; border: 1px solid #d6dde6; border-radius: 4px; overflow: hidden; }
.card-tabs { display: flex; height: 69px; }
.ctab { flex: 1; font-size: 32px; color: #3f454b; display: flex; align-items: center; justify-content: center; background: #f7f7f7; border-bottom: 1px solid #dcdcdc; border-left: 1px solid #dcdcdc; }
.ctab-off { padding-right: 18px; }
.ctab-on { flex: none; width: 359px; background: #fff; border: 0; }
.card-body { display: flex; padding: 15px 0 0 117px; gap: 4px; }
.big-user { width: 175px; height: 175px; }
.login-form { width: 326px; padding-top: 18px; display: flex; flex-direction: column; }
.igroup { height: 48px; display: flex; border: 1px solid #ced4da; border-radius: 4px; overflow: hidden; font-size: 19.600px; color: #6c757d; }
.igroup-pw { margin-top: 20px; height: 47px; }
.iprefix { width: 51px; flex: none; background: #e9ecef; border-right: 1px solid #ced4da; display: flex; align-items: center; justify-content: center; }
.igroup-pw .iprefix { width: 49px; }
.ifield { display: flex; align-items: center; padding-left: 16px; }
.i-env { width: 20px; height: 16px; }
.i-pad { width: 17px; height: 20px; }
.remember { margin-top: 24px; height: 22px; display: flex; align-items: center; gap: 7px; font-size: 20px; color: #008b8b; }
.check { width: 15px; height: 15px; border: 1px solid #6c6c6c; border-radius: 3px; background: #fff; }
.login-btn { margin-top: 34px; height: 48px; background: #1b6ec2; border-radius: 4px; color: #fff; font-size: 20px; display: flex; align-items: center; justify-content: center; }
.site-foot { flex: none; height: 88px; border-top: 2px solid #dcdfe3; display: grid; grid-template-columns: 1322px auto; padding: 49px 0 0 267px; font-size: 20px; line-height: 26px; color: #6c757d; }
.foot-link { color: #1f63d0; }

/* taskbars */
.taskbar { flex: none; display: flex; align-items: center; position: relative; color: #fff; }
.tb-l { height: 60px; padding-left: 548px; --tb: 55.1px; --ic: 29px; background: linear-gradient(90deg, #1b202b 0%, #1b202b 18%, #10205f 25%, #10205f 58%, #1b202b 68%, #1b202b 100%); }
.tb-r { height: 48px; padding-left: 631px; --tb: 44.1px; --ic: 24px; background: linear-gradient(90deg, #1e2632 0%, #14244f 28%, #10205f 40%, #10205f 65%, #1b202b 78%, #1b202b 100%); }
.tb-item { width: var(--tb); height: 100%; display: flex; align-items: center; justify-content: center; flex: none; position: relative; }
.tb-ico { width: var(--ic); height: var(--ic); }
.run::after { content: ""; position: absolute; bottom: 5px; left: 50%; width: 6px; height: 6px; margin-left: -3px; border-radius: 2px; background: #8e96a3; }
.active { background: rgba(255, 255, 255, .08); border-radius: 5px; height: 50px; width: 44px; margin: 0 5.5px; }
.tb-r .active { width: 38px; height: 42px; margin: 0 3px; }
.active::after { content: ""; position: absolute; bottom: 2px; left: 50%; width: 20px; height: 4px; margin-left: -10px; border-radius: 2px; background: #3db9f5; }
.tray { margin-left: auto; display: flex; align-items: center; padding-right: 25px; height: 100%; }
.tray-caret { width: 10px; height: 10px; border-left: 1px solid #fff; border-top: 1px solid #fff; transform: rotate(45deg) translate(2px, 2px); margin-right: 15px; }
.tray-ico { width: 20px; height: 24px; margin: 0 5.5px; }
.clock { display: flex; flex-direction: column; align-items: flex-end; font-size: 14px; line-height: 20px; margin: 0 9px 0 8px; }
.notif { width: 20px; height: 20px; border-radius: 50%; background: #3bb2f2; color: #10202e; font-size: 13px; text-align: center; line-height: 20px; }

/* docs page */
.docs { flex: 1; min-height: 0; background: #19191c; display: flex; flex-direction: column; font-family: "Noto Sans", sans-serif; color: #d0d0d2; }
.docs-head { height: 70px; flex: none; background: #303033; display: flex; align-items: center; padding-left: 22px; font-size: 14px; color: #cfcfd1; }
.pc-logo { width: 48px; height: 48px; margin-right: 13px; }
.pc-name { font-weight: 700; color: #fff; font-size: 14px; margin-right: 16px; }
.pc-ver { font-size: 15px; margin-right: 10px; }
.tri { width: 0; height: 0; border-left: 7px solid transparent; border-right: 7px solid transparent; border-top: 9px solid #cfcfd1; }
.pc-short { margin-left: auto; font-size: 13.200px; margin-right: 9px; }
.pc-contrast { width: 22px; height: 22px; margin: 0 23px 0 34px; }
.pc-get { width: 119px; height: 36px; border-radius: 18px; background: #307fff; color: #fff; font-size: 14px; display: flex; align-items: center; justify-content: center; }
.pc-search { width: 22px; height: 24px; margin: 0 32px 0 22px; }
.docs-body { flex: 1; min-height: 0; display: flex; }
.toc { width: 311px; flex: none; border-right: 1px solid #4a4a4d; padding-top: 23px; display: flex; flex-direction: column; font-family: "Roboto", sans-serif; font-size: 12.300px; overflow: hidden; }
.ti { height: 32px; flex: none; display: flex; align-items: center; position: relative; color: #d4d4d6; white-space: nowrap; }
.l1 { padding-left: 38px; }
.l2 { padding-left: 54px; }
.l3 { padding-left: 70px; }
.l1::before, .l2::before { content: ""; position: absolute; width: 0; height: 0; top: 11px; border-top: 4px solid transparent; border-bottom: 4px solid transparent; border-left: 5px solid #c9c9cb; }
.l1::before { left: 24px; }
.l2::before { left: 40px; }
.open::before { border-left: 4px solid transparent; border-right: 4px solid transparent; border-top: 5px solid #c9c9cb; border-bottom: 0; top: 13px; margin-left: -2px; }
.sel { background: #307fff; color: #fff; }
.article { flex: 1; min-width: 0; padding: 25px 0 0 245px; overflow: hidden; }
.crumbs { display: flex; gap: 4px; line-height: 24px; font-size: 14px; color: #a3a3a5; white-space: nowrap; }
.crumbs i { font-style: normal; color: #6b6b6e; }
.crumbs b { font-weight: 400; color: #f0f0f0; }
.title { margin: 48px 0 0; font-family: "Inter", sans-serif; font-weight: 600; font-size: 39.400px; line-height: 48px; color: #e0e0e2; white-space: nowrap; }
.modified { margin: 15px 0 0; font-size: 13.200px; line-height: 20px; color: #b0b0b2; }
.intro { margin: 51px 0 0; width: 704px; font-size: 14px; line-height: 24px; color: #c4c4c6; }
.dashed { border-bottom: 1px solid #4d4d50; padding-bottom: 2px; }
.procedure { width: 706px; min-height: 700px; margin-top: 23px; border: 1px solid #3b3b3e; padding: 25px 32px 0; }
.proc-title { margin: 0; font-family: "Roboto", sans-serif; font-weight: 700; font-size: 20.500px; line-height: 29px; color: #d4d4d6; width: 500px; }
.proc-list { list-style: none; margin: 24px 0 0; padding: 0 0 0 22px; }
.proc-item { position: relative; font-size: 14px; line-height: 24px; color: #c4c4c6; width: 600px; }
.proc-item::before { content: ""; position: absolute; left: -21px; top: 10px; width: 4px; height: 4px; border-radius: 50%; background: #d4d4d6; }
.proc-item b { color: #dedee0; }
.proc-second { margin-top: 25px; }
.gutter-ico { display: inline-block; width: 15px; height: 19px; background: #fff; vertical-align: -5px; position: relative; }
.gutter-ico::after { content: ""; position: absolute; left: 5px; top: 5px; border-left: 6px solid #4c9a58; border-top: 5px solid transparent; border-bottom: 5px solid transparent; }

.shot { position: relative; overflow: hidden; width: 581px; margin-top: 11px; background: #fff; color: #222; }
.shot-a { height: 247px; display: flex; filter: blur(.35px); }
.gutter { width: 48px; flex: none; background: #f5f5f5; border-right: 1px solid #e4e4e4; display: flex; flex-direction: column; padding-left: 5px; font: 11px/17.900px "Liberation Mono", monospace; color: #b3b3b3; }
.code { margin: 0; flex: none; padding-left: 6px; font: 10.770px/17.900px "Liberation Mono", monospace; color: #2b2b2b; white-space: pre; }
.kw { color: #2f4fa8; }
.shot-scroll { position: absolute; left: 574px; top: 77px; width: 5px; height: 144px; border-radius: 3px; background: #c2c2c2; }
.shot-tick { position: absolute; left: 570px; top: 112px; width: 11px; height: 1px; background: #d9b98a; }
.ctx { position: absolute; left: 166px; top: -11px; width: 267px; background: #f2f2f2; box-shadow: 0 0 3px #999; font: 12px/17px "Noto Sans", sans-serif; letter-spacing: .2px; color: #333; padding-bottom: 20px; }
.mi { height: 17px; padding: 0 14px 0 20px; display: flex; position: relative; white-space: nowrap; }
.mi em { margin-left: auto; font-style: normal; color: #777; font-family: "DejaVu Sans", sans-serif; font-size: 11px; }
.arrow::after { content: ""; position: absolute; right: 8px; top: 5px; width: 5px; height: 5px; border-top: 1px solid #999; border-right: 1px solid #999; transform: rotate(45deg); }
.ms { height: 2.400px; border-top: 1px solid #d8d8d8; }
.hl { background: #1f72c4; color: #fff; }
.hl em { color: #fff; }
.play { position: absolute; left: 6px; top: 3px; border-left: 8px solid #4caf50; border-top: 5px solid transparent; border-bottom: 5px solid transparent; }
.bug { position: absolute; left: 6px; top: 3px; width: 9px; height: 11px; border-radius: 4px; background: #5aa05f; }
.py { position: absolute; left: 4px; top: 1px; width: 12px; height: 14px; border-radius: 4px; background: linear-gradient(135deg, #3b7bbf 50%, #f5c93a 50%); }
.cmp { position: absolute; left: 5px; top: 2px; width: 10px; height: 13px; border: 1px solid #777; background: #38b0e8; }
.dia { position: absolute; left: 5px; top: 3px; width: 11px; height: 11px; background: #9fb9d0; border-top: 2px solid #777; border-bottom: 2px solid #777; }

.shot-b { height: 140px; border-top: 2px solid #c8c8c8; }
.gutter2 { position: absolute; left: 0; top: 0; bottom: 0; width: 33px; background: #f2f2f2; display: flex; flex-direction: column; padding: 0 0 0 5px; font: 14px/18.400px "Liberation Sans", sans-serif; color: #888; }
.code2 { position: absolute; left: 61px; top: -1px; font: 700 12px/18px "Liberation Mono", monospace; white-space: pre; color: #222; }
.kw2 { color: #1b3a99; }
.str2 { color: #0a7a2f; }
.shot-tick2 { position: absolute; right: 0; top: 46px; width: 15px; height: 4px; background: #f6bcbc; }
.ctx2 { position: absolute; left: 32px; top: 11px; width: 250px; background: #f2f2f2; box-shadow: 0 1px 4px #888; padding-top: 4px; font: 15px/19px "Liberation Sans", sans-serif; color: #2d2d2d; }
.mi2 { height: 18.700px; padding: 0 18px 0 27px; position: relative; display: flex; white-space: nowrap; }
.mi2 em { margin-left: auto; font-style: normal; font-family: "DejaVu Sans", sans-serif; font-size: 14px; color: #555; }
.hl2 { background: #4a7de0; color: #fff; }
.hl2 em { color: #fff; }
.play2 { position: absolute; left: 9px; top: 2px; border-left: 10px solid #59a869; border-top: 7px solid transparent; border-bottom: 7px solid transparent; }
.bug2 { position: absolute; left: 9px; top: 2px; width: 11px; height: 15px; border-radius: 5px; background: #59a869; }
.cov2 { position: absolute; left: 8px; top: 2px; width: 12px; height: 15px; border: 2px solid #6e6e6e; border-radius: 4px; }

.scrollbar { width: 17px; flex: none; background: #f1f1f1; display: flex; flex-direction: column; align-items: center; }
.sb-up, .sb-down { width: 0; height: 0; border-left: 4px solid transparent; border-right: 4px solid transparent; flex: none; }
.sb-up { border-bottom: 6px solid #a3a3a3; margin: 6px 0 5px; }
.sb-thumb { width: 100%; flex: 1; background: #c1c1c1; }
.sb-down { border-top: 6px solid #505050; margin: 5px 0 6px; }
```
